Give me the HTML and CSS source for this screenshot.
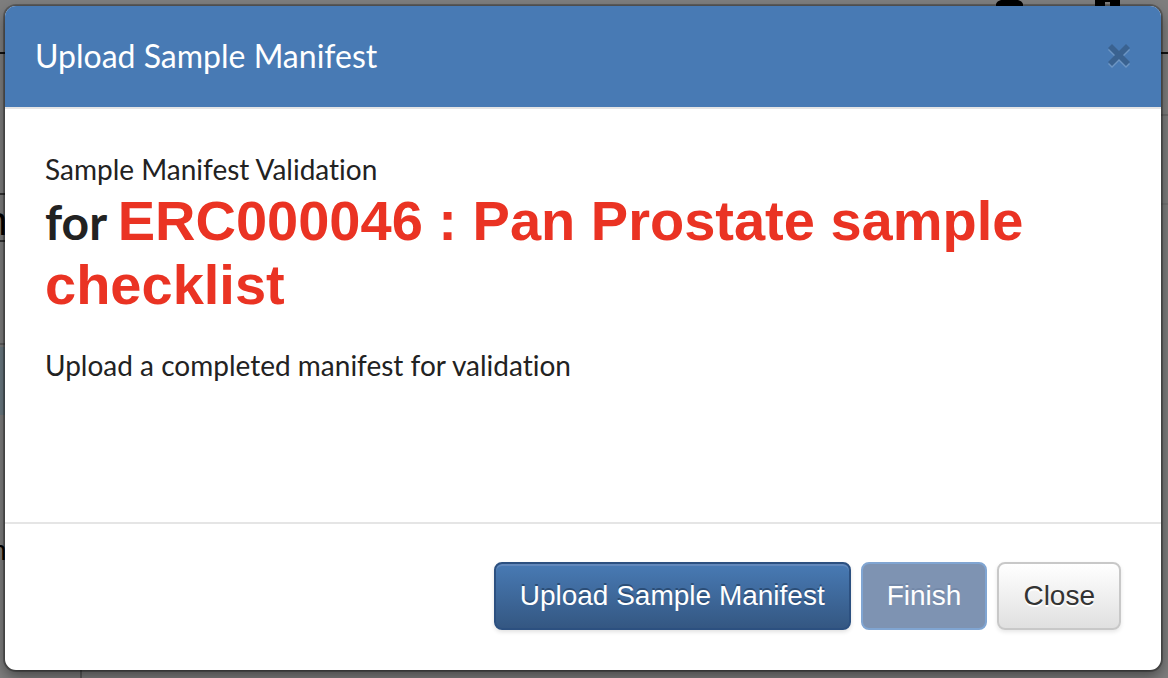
FILE: index.html
```html
<!DOCTYPE html>
<html lang="en">
<head>
<meta charset="utf-8">
<meta name="viewport" content="width=device-width, initial-scale=1">
<title>Upload Sample Manifest</title>
<link rel="stylesheet" href="styles.css">
</head>
<body>
<div class="page-behind" aria-hidden="true">
  <span class="rule rule-top"></span>
  <span class="rule rule-faint-right"></span>
  <span class="rule rule-soft-right"></span>
  <span class="rule rule-row-start"></span>
  <span class="rule rule-row-end"></span>
  <span class="rule rule-panel"></span>
  <span class="panel-edge"></span>
  <span class="column-line"></span>
  <span class="letter letter-row">n</span>
  <span class="letter letter-foot">n</span>
  <svg class="toolbar-icons" viewBox="0 0 128 8" width="128" height="8">
    <path d="M0 8V4Q1 1 5 0H22Q26 1 27 4V8Z"/>
    <path d="M99 0H124V8H114V2H109V8H99Z"/>
  </svg>
</div>
<main class="modal" role="dialog" aria-modal="true" aria-labelledby="modal-title">
  <header class="modal-header">
    <h1 class="modal-title" id="modal-title">Upload Sample Manifest</h1>
    <button class="close-icon" type="button" aria-label="Dismiss">
      <svg viewBox="0 0 24 26" width="24" height="26" aria-hidden="true">
        <path class="cross-light" d="M5 3L12 10L19 3L23 7L16 14L23 21L19 25L12 18L5 25L1 21L8 14L1 7Z"/>
        <path class="cross" d="M5 1L12 8L19 1L23 5L16 12L23 19L19 23L12 16L5 23L1 19L8 12L1 5Z"/>
      </svg>
    </button>
  </header>
  <section class="modal-body">
    <p class="text">Sample Manifest Validation</p>
    <h2 class="checklist">for <span class="checklist-name">ERC000046 : Pan Prostate sample checklist</span></h2>
    <p class="text">Upload a completed manifest for validation</p>
  </section>
  <footer class="modal-footer">
    <button class="btn btn-primary" type="button">Upload Sample Manifest</button>
    <button class="btn btn-finish" type="button" disabled>Finish</button>
    <button class="btn btn-default" type="button">Close</button>
  </footer>
</main>
</body>
</html>
```
FILE: styles.css
```css
* {
  box-sizing: border-box;
}

body {
  margin: 0;
  min-height: 100vh;
  padding: 6px 7px 8px 5px;
  display: flex;
  flex-direction: column;
  background: #7e7e7e;
  color: #222;
  font-family: Lato, "Open Sans", sans-serif;
  font-variant-ligatures: none;
  overflow: hidden;
}

.page-behind {
  position: absolute;
  inset: 0;
  overflow: hidden;
}

.page-behind > * {
  position: absolute;
}

.rule {
  height: 2px;
  background: #333;
}

.rule-top {
  top: 52px;
  left: 0;
  right: 0;
  background: #111;
}

.rule-faint-right {
  top: 114px;
  right: 0;
  width: 8px;
  background: #6c6c6c;
}

.rule-soft-right {
  top: 203px;
  right: 0;
  width: 8px;
  background: #747474;
}

.rule-row-start {
  top: 193px;
  left: 0;
  width: 8px;
}

.rule-row-end {
  top: 240px;
  left: 0;
  width: 8px;
}

.rule-panel {
  top: 343px;
  left: 0;
  width: 8px;
  background: #606060;
}

.panel-edge {
  top: 347px;
  left: 0;
  width: 8px;
  height: 68px;
  background: #6b7a82;
}

.column-line {
  bottom: 0;
  left: 80px;
  width: 2px;
  height: 10px;
  background: #5c5c5c;
}

.letter {
  color: #000;
  font: 28px/32px "Liberation Sans", Arial, sans-serif;
}

.letter-row {
  top: 205px;
  left: -15px;
  font-size: 40px;
}

.letter-foot {
  top: 535px;
  left: -9px;
}

.toolbar-icons {
  top: 0;
  left: 996px;
}

.modal {
  position: relative;
  flex: 1;
  display: flex;
  flex-direction: column;
  background: #fff;
  border-radius: 11px;
  box-shadow: 0 0 0 1px rgba(0, 0, 0, .1), 0 0 0 2px rgba(0, 0, 0, .25), 0 6px 14px rgba(0, 0, 0, .45);
}

.modal-header {
  display: flex;
  align-items: center;
  justify-content: space-between;
  padding: 27px 30px 29px;
  border-bottom: 2px solid #e5e5e5;
  border-radius: 11px 11px 0 0;
  background: #487ab4;
  background-clip: padding-box;
}

.modal-title {
  margin: 0;
  color: #fff;
  font-size: 32px;
  line-height: 45px;
  font-weight: 400;
}

.close-icon {
  display: flex;
  padding: 0;
  border: 0;
  background: none;
  cursor: pointer;
}

.cross {
  fill: #3a6290;
}

.cross-light {
  fill: #6d95c3;
}

.modal-body {
  flex: 1;
  padding: 40px;
}

.text {
  margin: 0;
  font-size: 28px;
  line-height: 40px;
}

.checklist {
  margin: 0 0 28px;
  font-size: 48px;
  line-height: 63px;
  font-weight: 700;
}

.checklist-name {
  color: #ea3323;
  font-family: "Liberation Sans", Arial, sans-serif;
  font-size: 56px;
}

.modal-footer {
  display: flex;
  flex-wrap: wrap;
  justify-content: flex-end;
  gap: 10px;
  padding: 38px 40px 40px;
  border-top: 2px solid #e5e5e5;
}

.btn {
  padding: 12px 24px;
  border: 2px solid #ccc;
  border-radius: 8px;
  color: #333;
  font: 28px/40px "Liberation Sans", Arial, sans-serif;
  cursor: pointer;
}

.btn-primary {
  border-color: #2c5080;
  background: linear-gradient(#487ab4, #345782);
  box-shadow: inset 0 2px #6288bb, 0 2px 4px rgba(0, 0, 0, .12);
  color: #fff;
  text-shadow: 0 -2px #2b4d76;
}

.btn-finish {
  border-color: #80a5d2;
  background: #7e93b2;
  color: #fff;
  text-shadow: 0 -2px #7388a8;
  cursor: default;
}

.btn-default {
  border-color: #c8c8c8;
  background: linear-gradient(#fff, #e0e0e0);
  box-shadow: 0 2px 4px rgba(0, 0, 0, .1);
  text-shadow: 0 2px #fff;
}
```
